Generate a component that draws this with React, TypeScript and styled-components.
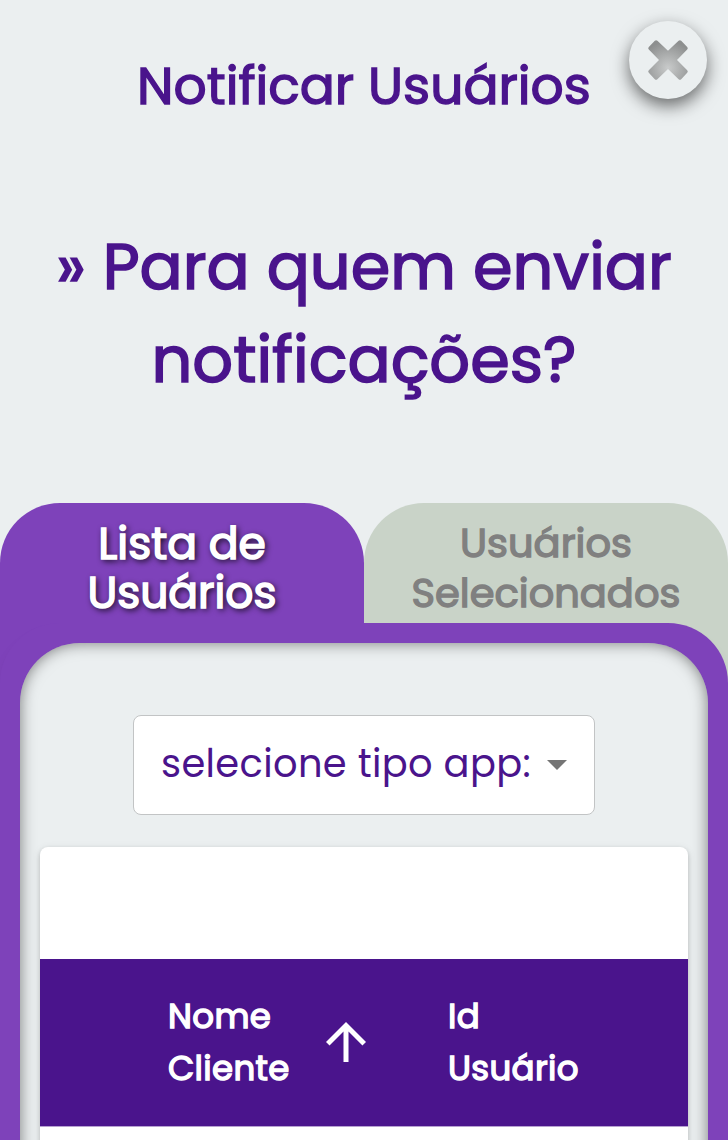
import React from 'react';
import styled, { createGlobalStyle } from 'styled-components';

const colors = {
  page: '#ebeff0',
  primary: '#4a148c',
  accent: '#7e42ba',
  idleTab: '#c9d3c8',
};

const GlobalStyle = createGlobalStyle`
  *, *::before, *::after { box-sizing: border-box; }
  body {
    margin: 0;
    background: ${colors.page};
    color: ${colors.primary};
    font-family: Poppins, Inter, sans-serif;
    font-weight: 400;
    overflow: hidden;
  }
  button { font: inherit; color: inherit; border: 0; padding: 0; }
`;

const Page = styled.main`
  position: relative;
  display: flex;
  flex-direction: column;
  height: 1140px;
  overflow: hidden;
`;

const Header = styled.header`
  display: flex;
  flex-direction: column;
  align-items: center;
  flex: none;
  height: 503px;
  padding-top: 60px;
`;

const Line = styled.span`
  display: block;
  white-space: nowrap;
`;

const Title = styled.h1`
  margin: 0;
  font-size: 51.9px;
  font-weight: 400;
  line-height: 53px;
  -webkit-text-stroke: 1.4px currentColor;
`;

const Question = styled.h2`
  margin: 107px 0 0;
  font-size: 63.8px;
  font-weight: 400;
  line-height: 93px;
  text-align: center;
  -webkit-text-stroke: 1.6px currentColor;
`;

const CloseButton = styled.button`
  position: absolute;
  top: 21px;
  right: 21px;
  width: 78px;
  height: 78px;
  display: grid;
  place-items: center;
  border-radius: 50%;
  background: ${colors.page};
  box-shadow: 0 7px 17px rgba(0, 0, 0, 0.56);
`;

const Tabs = styled.div`
  display: grid;
  grid-template-columns: 1fr 1fr;
  flex: none;
  height: 120px;
`;

const Tab = styled.button<{ $active?: boolean }>`
  height: 182px;
  padding-top: ${({ $active }) => ($active ? 17 : 15)}px;
  display: flex;
  flex-direction: column;
  align-items: center;
  border-radius: 60px 60px 0 0;
  background: ${({ $active }) => ($active ? colors.accent : colors.idleTab)};
  color: ${({ $active }) => ($active ? '#fff' : '#808080')};
  font-size: ${({ $active }) => ($active ? 44 : 40)}px;
  line-height: ${({ $active }) => ($active ? 48.6 : 50)}px;
  text-shadow: ${({ $active }) => ($active ? '2px 2px 6px #000' : 'none')};
  -webkit-text-stroke: ${({ $active }) => ($active ? 1.6 : 1.4)}px currentColor;
`;

const Panel = styled.section`
  position: relative;
  flex: none;
  height: 600px;
  display: flex;
  padding: 20px 20px 0;
  border-radius: 60px 60px 0 0;
  background: ${colors.accent};
  box-shadow: 0 10px 14px rgba(0, 0, 0, 0.06);
`;

const PanelBody = styled.div`
  flex: 1;
  display: flex;
  flex-direction: column;
  align-items: center;
  padding: 72px 20px 0;
  border-radius: 60px 60px 0 0;
  background: ${colors.page};
  box-shadow: inset 0 0 15px rgba(0, 0, 0, 0.5);
`;

const Select = styled.button`
  display: flex;
  align-items: center;
  justify-content: space-between;
  flex: none;
  width: 462px;
  height: 100px;
  padding: 0 27px 3px 27px;
  border: 1px solid #c2c4c5;
  border-radius: 8px;
  background: #fff;
  font-size: 38.4px;
  letter-spacing: 0.36px;
`;

const Caret = styled.svg`
  flex: none;
  width: 20px;
  height: 10px;
  margin-top: 3px;
`;

const Card = styled.div`
  flex: 1;
  align-self: stretch;
  margin-top: 32px;
  padding-top: 112px;
  border-radius: 8px 8px 0 0;
  background: #fff;
  box-shadow: 0 2px 4px rgba(0, 0, 0, 0.16), 0 2px 8px rgba(0, 0, 0, 0.1);
`;

const HeadRow = styled.div`
  display: grid;
  grid-template-columns: 128px 280px 1fr;
  align-items: center;
  height: 168px;
  border-bottom: 1px solid #b7a1d1;
  background: ${colors.primary};
  color: #fff;
  font-size: 34px;
  letter-spacing: 0.36px;
  line-height: 52px;
`;

const HeadCell = styled.div`
  display: flex;
  align-items: center;
  gap: 26px;
`;

const CellLabel = styled.span`
  display: block;
  padding-bottom: 2px;
  -webkit-text-stroke: 1.4px currentColor;
`;

const SortArrow = styled.svg`
  flex: none;
  width: 60px;
  height: 60px;
  margin-top: -1px;
  fill: #fff;
`;

export default function App() {
  return (
    <Page>
      <GlobalStyle />
      <Header>
        <Title>Notificar Usuários</Title>
        <Question>
          <Line>» Para quem enviar</Line>
          <Line>notificações?</Line>
        </Question>
        <CloseButton aria-label="Fechar">
          <svg width="42" height="42" viewBox="-21 -21 42 42">
            <defs>
              <radialGradient id="cross" gradientUnits="userSpaceOnUse" cx="0" cy="8" r="27">
                <stop offset="0" stopColor="#c9cbcb" />
                <stop offset="1" stopColor="#8d8f8f" />
              </radialGradient>
            </defs>
            <path
              fill="url(#cross)"
              d="M-13.2-19.2q1.3-1.3 2.6 0L0-9.2l10.6-10q1.3-1.3 2.6 0l6 6.2q1.2 1.3 0 2.6L9 0l10.2 10.2q1.2 1.3 0 2.6l-6 6.4q-1.3 1.3-2.6 0L0 9l-10.6 10.2q-1.3 1.3-2.6 0l-6-6.4q-1.2-1.3 0-2.6L-9 0l-10.2-10.4q-1.2-1.3 0-2.6z"
            />
          </svg>
        </CloseButton>
      </Header>
      <Tabs>
        <Tab $active>
          <Line>Lista de</Line>
          <Line>Usuários</Line>
        </Tab>
        <Tab>
          <Line>Usuários</Line>
          <Line>Selecionados</Line>
        </Tab>
      </Tabs>
      <Panel>
        <PanelBody>
          <Select>
            <Line>selecione tipo app:</Line>
            <Caret viewBox="0 0 20 10"><path d="M0 0h20L10 10z" fill="#757575" /></Caret>
          </Select>
          <Card>
            <HeadRow>
              <span />
              <HeadCell>
                <CellLabel>
                  <Line>Nome</Line>
                  <Line>Cliente</Line>
                </CellLabel>
                <SortArrow viewBox="0 0 24 24">
                  <path d="M4 12l1.41 1.41L11 7.83V20h2V7.83l5.58 5.59L20 12l-8-8-8 8z" />
                </SortArrow>
              </HeadCell>
              <HeadCell>
                <CellLabel>
                  <Line>Id</Line>
                  <Line>Usuário</Line>
                </CellLabel>
              </HeadCell>
            </HeadRow>
          </Card>
        </PanelBody>
      </Panel>
    </Page>
  );
}
